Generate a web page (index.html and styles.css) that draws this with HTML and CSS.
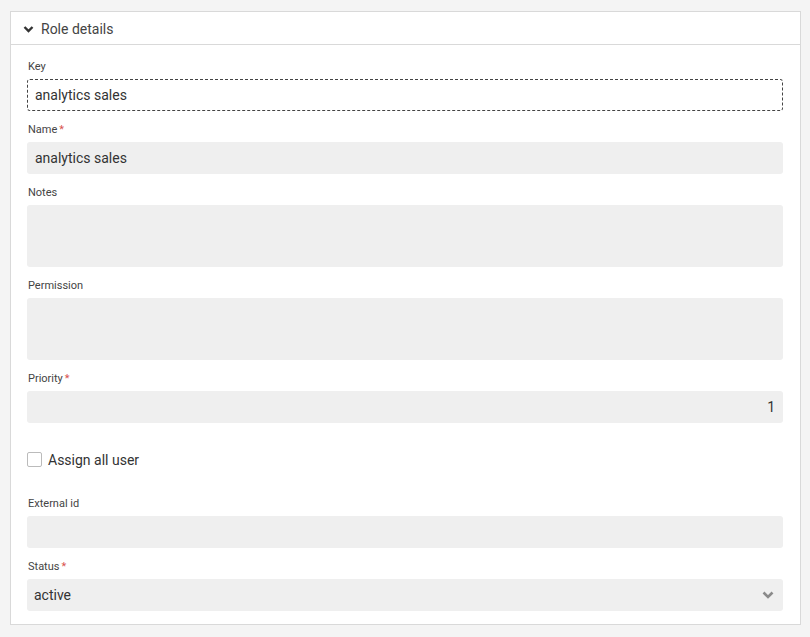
FILE: index.html
```html
<!DOCTYPE html>
<html>
<head>
<meta charset="utf-8">
<link rel="stylesheet" href="styles.css">
</head>
<body>
<div class="panel">
  <div class="panel-header">
    <svg class="chev" width="11" height="10" viewBox="0 0 11 10"><path d="M1.5 3 L5.5 7 L9.5 3" fill="none" stroke="#333" stroke-width="2.4"/></svg>
    <span>Role details</span>
  </div>
  <div class="panel-body">
    <div class="field">
      <div class="label">Key</div>
      <div class="input focused">analytics sales</div>
    </div>
    <div class="field">
      <div class="label">Name<span class="req">*</span></div>
      <div class="input">analytics sales</div>
    </div>
    <div class="field">
      <div class="label">Notes</div>
      <div class="input area"></div>
    </div>
    <div class="field">
      <div class="label">Permission</div>
      <div class="input area"></div>
    </div>
    <div class="field">
      <div class="label">Priority<span class="req">*</span></div>
      <div class="input num">1</div>
    </div>
    <div class="check-row">
      <span class="box"></span>
      <span class="check-label">Assign all user</span>
    </div>
    <div class="field">
      <div class="label">External id</div>
      <div class="input"></div>
    </div>
    <div class="field">
      <div class="label">Status<span class="req">*</span></div>
      <div class="input select">
        <span>active</span>
        <svg width="14" height="14" viewBox="0 0 14 14"><path d="M2.5 4.5 L7 9 L11.5 4.5" fill="none" stroke="#8a8a8a" stroke-width="2.6"/></svg>
      </div>
    </div>
  </div>
</div>
</body>
</html>
```
FILE: styles.css
```css
html, body {
  margin: 0;
  padding: 0;
  background: #f4f4f4;
  font-family: Roboto, "Liberation Sans", sans-serif;
  color: #333;
}
body {
  padding: 11px 9px 0 10px;
}
.panel {
  background: #fff;
  border: 1px solid #d9d9d9;
  width: 789px;
}
.panel-header {
  box-sizing: border-box;
  height: 33px;
  padding-top: 1px;
  border-bottom: 1px solid #d9d9d9;
  display: flex;
  align-items: center;
  padding-left: 12px;
  gap: 7px;
  font-size: 14px;
  color: #444;
}
.chev { display: block; }
.panel-body {
  padding: 15px 17px 13px 16px;
}
.field {
  margin-bottom: 12px;
}
.label {
  font-size: 11px;
  line-height: 14px;
  color: #444;
  margin-bottom: 5px;
  padding-left: 1px;
}
.req {
  color: #d9534f;
  margin-left: 2px;
}
.input {
  box-sizing: border-box;
  height: 32px;
  background: #efefef;
  border-radius: 3px;
  font-size: 14px;
  line-height: 32px;
  padding: 0 8px;
  color: #333;
}
.input.focused {
  background: #fff;
  border: 1px dashed #444;
  line-height: 30px;
  padding: 0 7px;
}
.input.area {
  height: 62px;
}
.input.num {
  text-align: right;
}
.input.select {
  display: flex;
  align-items: center;
  justify-content: space-between;
  padding: 0 8px 0 7px;
}
.input.select svg { display: block; }
.check-row {
  display: flex;
  align-items: center;
  gap: 6px;
  margin: 29px 0 30px;
  height: 15px;
}
.box {
  box-sizing: border-box;
  width: 15px;
  height: 15px;
  border: 1px solid #bbb;
  border-radius: 2px;
  background: #fff;
}
.check-label {
  font-size: 14px;
  color: #333;
}
.field:last-child { margin-bottom: 0; }
```
